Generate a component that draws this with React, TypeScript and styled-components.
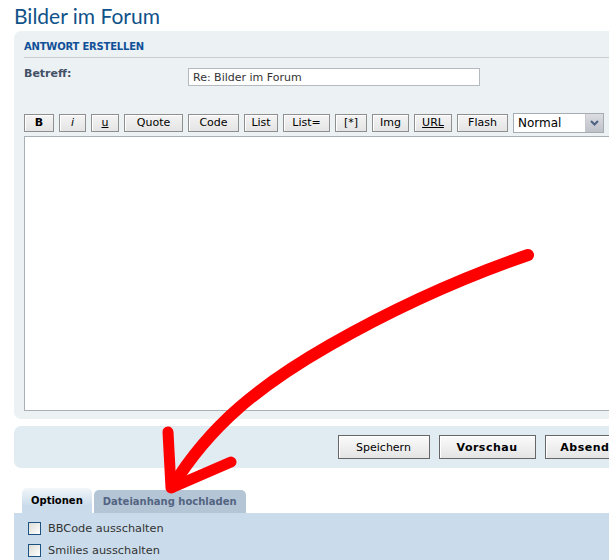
import React from "react";
import styled, { createGlobalStyle } from "styled-components";

const GlobalStyle = createGlobalStyle`
  html, body {
    margin: 0;
    padding: 0;
    background: #ffffff;
    overflow: hidden;
  }
  body {
    font-family: "DejaVu Sans", Verdana, sans-serif;
    color: #333333;
  }
`;

const Page = styled.div`
  position: relative;
  width: 951px;
  padding: 0 0 0 14px;
`;

const Title = styled.h2`
  margin: 0;
  padding-top: 3px;
  height: 28px;
  font-family: "Lato", "Liberation Sans", sans-serif;
  font-weight: normal;
  font-size: 21px;
  color: #105289;
`;

const Panel = styled.div<{ $bg: string }>`
  background: ${(p) => p.$bg};
  border-radius: 7px;
`;

const EditPanel = styled(Panel)`
  padding: 10px 0 8px 10px;
`;

const PanelTitle = styled.h3`
  margin: 0;
  padding: 0 0 4px;
  border-bottom: 1px solid #cccccc;
  font-size: 10px;
  font-weight: bold;
  letter-spacing: -0.2px;
  color: #115098;
  line-height: 12px;
`;

const FieldRow = styled.div`
  display: flex;
  align-items: flex-start;
  padding-top: 10px;
  height: 18px;
`;

const Label = styled.label`
  width: 164px;
  font-size: 11px;
  font-weight: bold;
  color: #425067;
  line-height: 12px;
`;

const TextInput = styled.div`
  width: 286px;
  height: 16px;
  border: 1px solid #b4bac0;
  background: #ffffff;
  padding-left: 4px;
  font-size: 11px;
  line-height: 17px;
  color: #333333;
`;

const Toolbar = styled.div`
  display: flex;
  align-items: center;
  gap: 5px;
  margin-top: 26px;
  height: 21px;
`;

const ToolButton = styled.div<{ $w: number; $bold?: boolean; $under?: boolean; $italic?: boolean }>`
  box-sizing: border-box;
  flex: none;
  width: ${(p) => p.$w}px;
  height: 18px;
  border: 1px solid #8f8f8f;
  box-shadow: inset 1px 1px 0 #ffffff;
  background: linear-gradient(#f4f4f4, #e4e4e4);
  display: flex;
  align-items: center;
  justify-content: center;
  font-size: 11px;
  color: #000000;
  font-weight: ${(p) => (p.$bold ? "bold" : "normal")};
  font-style: ${(p) => (p.$italic ? "italic" : "normal")};
  text-decoration: ${(p) => (p.$under ? "underline" : "none")};
`;

const Select = styled.div`
  box-sizing: border-box;
  flex: none;
  width: 91px;
  height: 20px;
  border: 1px solid #a5acb2;
  background: #ffffff;
  display: flex;
  align-items: center;
  justify-content: space-between;
  font-family: "DejaVu Sans", sans-serif;
  font-size: 12px;
  color: #000000;
  padding-left: 4px;
`;

const SelectArrow = styled.div`
  width: 17px;
  height: 18px;
  background: linear-gradient(#dcdde2, #bfc1c9);
  border-left: 1px solid #c7c9cf;
  display: flex;
  align-items: center;
  justify-content: center;
`;

const Editor = styled.div`
  margin-top: 3px;
  height: 273px;
  border: 1px solid #a9b0b5;
  background: #ffffff;
`;

const SubmitPanel = styled(Panel)`
  margin-top: 7px;
  height: 42px;
  display: flex;
  align-items: center;
  justify-content: center;
  gap: 9px;
`;

const SubmitButton = styled.div<{ $w: number; $bold?: boolean }>`
  box-sizing: border-box;
  width: ${(p) => p.$w}px;
  height: 24px;
  border: 1px solid #666666;
  box-shadow: inset 1px 1px 0 #ffffff;
  background: linear-gradient(#fbfbfb, #e4e4e4);
  display: flex;
  align-items: center;
  justify-content: center;
  font-size: 11px;
  color: #000000;
  font-weight: ${(p) => (p.$bold ? "bold" : "normal")};
  letter-spacing: ${(p) => (p.$bold ? "0.5px" : "0")};
`;

const Tabs = styled.div`
  display: flex;
  gap: 2px;
  margin-top: 20px;
  padding-left: 8px;
  height: 25px;
  align-items: flex-end;
`;

const Tab = styled.div<{ $active?: boolean }>`
  height: ${(p) => (p.$active ? 25 : 23)}px;
  padding: 0 9px;
  border-radius: 5px 5px 0 0;
  background: ${(p) =>
    p.$active ? "linear-gradient(#f2f6f9, #cadceb 70%)" : "#b4c6d6"};
  display: flex;
  align-items: center;
  font-size: 10px;
  font-weight: bold;
  color: ${(p) => (p.$active ? "#000000" : "#536482")};
`;

const OptionsPanel = styled.div`
  background: #cadceb;
  border-radius: 0 7px 0 0;
  padding: 9px 0 12px 14px;
  display: flex;
  flex-direction: column;
  gap: 9px;
`;

const CheckRow = styled.label`
  display: flex;
  align-items: center;
  gap: 7px;
  font-size: 11.3px;
  color: #333333;
  height: 13px;
`;

const Box = styled.span`
  box-sizing: border-box;
  width: 13px;
  height: 13px;
  border: 1px solid #1c5180;
  background: linear-gradient(135deg, #dcdcd6, #ffffff);
`;

const Overlay = styled.svg`
  position: absolute;
  left: 0;
  top: 0;
  pointer-events: none;
`;

const tools: { label: string; w: number; bold?: boolean; italic?: boolean; under?: boolean }[] = [
  { label: "B", w: 30, bold: true },
  { label: "i", w: 27, italic: true },
  { label: "u", w: 28, under: true },
  { label: "Quote", w: 59 },
  { label: "Code", w: 51 },
  { label: "List", w: 34 },
  { label: "List=", w: 47 },
  { label: "[*]", w: 32 },
  { label: "Img", w: 37 },
  { label: "URL", w: 38, under: true },
  { label: "Flash", w: 51 },
];

export default function App() {
  return (
    <>
      <GlobalStyle />
      <Page>
        <Title>Bilder im Forum</Title>
        <EditPanel $bg="#ecf1f3">
          <PanelTitle>ANTWORT ERSTELLEN</PanelTitle>
          <FieldRow>
            <Label>Betreff:</Label>
            <TextInput>Re: Bilder im Forum</TextInput>
          </FieldRow>
          <Toolbar>
            {tools.map((t) => (
              <ToolButton key={t.label} $w={t.w} $bold={t.bold} $italic={t.italic} $under={t.under}>
                {t.label}
              </ToolButton>
            ))}
            <Select>
              Normal
              <SelectArrow>
                <svg width="9" height="6" viewBox="0 0 9 6">
                  <path d="M1 1 L4.5 4.5 L8 1" fill="none" stroke="#4d6185" strokeWidth="2" />
                </svg>
              </SelectArrow>
            </Select>
            <ToolButton $w={40} />
          </Toolbar>
          <Editor />
        </EditPanel>
        <SubmitPanel $bg="#e1ebf2">
          <SubmitButton $w={92}>Speichern</SubmitButton>
          <SubmitButton $w={97} $bold>Vorschau</SubmitButton>
          <SubmitButton $w={97} $bold>Absenden</SubmitButton>
        </SubmitPanel>
        <Tabs>
          <Tab $active>Optionen</Tab>
          <Tab>Dateianhang hochladen</Tab>
        </Tabs>
        <OptionsPanel>
          <CheckRow>
            <Box />
            BBCode ausschalten
          </CheckRow>
          <CheckRow>
            <Box />
            Smilies ausschalten
          </CheckRow>
        </OptionsPanel>
        <Overlay width="609" height="560" viewBox="0 0 609 560">
          <g fill="none" stroke="#ff0000" strokeLinecap="round" strokeLinejoin="round">
            <path d="M528,255 C470,275 400,305 330,345 S210,425 172,487" strokeWidth="12" />
            <path d="M168,432 L171,488 L231,462" strokeWidth="11" />
          </g>
        </Overlay>
      </Page>
    </>
  );
}
